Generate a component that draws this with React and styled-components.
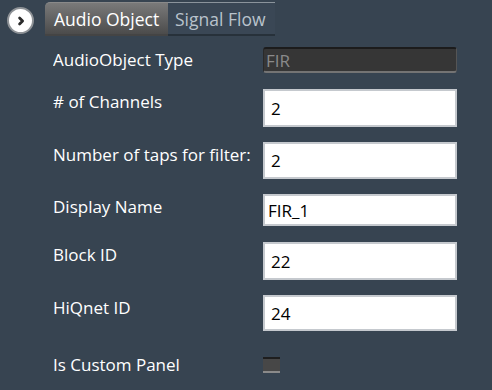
import React from 'react';
import styled, { createGlobalStyle } from 'styled-components';

const GlobalStyle = createGlobalStyle`
  html, body {
    margin: 0;
    padding: 0;
    background: #374451;
  }
  body {
    font-family: "Open Sans", "Noto Sans", sans-serif;
  }
`;

const Page = styled.div`
  width: 492px;
  height: 390px;
  background: #374451;
  overflow: hidden;
`;

const Header = styled.div`
  display: flex;
  align-items: flex-start;
  padding: 2px 0 0 7px;
  height: 45px;
  box-sizing: border-box;
`;

const CircleButton = styled.button`
  width: 27px;
  height: 27px;
  margin-top: 5px;
  margin-right: 11px;
  border-radius: 50%;
  background: #fff;
  border: 2px solid #8e9296;
  box-sizing: border-box;
  padding: 0;
  display: flex;
  align-items: center;
  justify-content: center;
`;

const TabStrip = styled.div`
  display: flex;
  height: 34px;
`;

const Tab = styled.div`
  display: flex;
  align-items: center;
  box-sizing: border-box;
  height: 34px;
  font-size: 17.5px;
  padding: 0 0 0 ${(p) => (p.$active ? 9 : 7)}px;
  width: ${(p) => p.$width}px;
  white-space: nowrap;
  overflow: hidden;
  color: ${(p) => (p.$active ? '#ffffff' : '#b9c3cc')};
  background: ${(p) =>
    p.$active ? 'linear-gradient(#7a7a7a, #4b4b4b)' : '#3a4755'};
  border-top: 1px solid ${(p) => (p.$active ? '#8a8a8a' : '#8b949c')};
  border-bottom: 2px solid ${(p) => (p.$active ? '#444' : '#27313a')};
  border-radius: ${(p) => (p.$active ? '5px 0 0 0' : '0')};
`;

const Form = styled.div`
  display: flex;
  flex-direction: column;
  padding-left: 53px;
  padding-top: 2px;
`;

const Row = styled.div`
  display: grid;
  grid-template-columns: 210px 194px;
  align-items: ${(p) => (p.$center ? 'center' : 'start')};
  margin-bottom: ${(p) => p.$gap}px;
`;

const Label = styled.div`
  color: #ffffff;
  font-size: 17px;
  line-height: 26px;
  white-space: nowrap;
  overflow: hidden;
  padding-right: 14px;
`;

const TextBox = styled.div`
  box-sizing: border-box;
  height: ${(p) => p.$h}px;
  background: #fff;
  border: 2px solid #c5c9ce;
  color: #000;
  font-size: 17px;
  display: flex;
  align-items: center;
  padding-left: ${(p) => p.$pad}px;
`;

const ReadOnlyBox = styled.div`
  box-sizing: border-box;
  height: 26px;
  background: #363636;
  border-top: 2px solid #1c1c1c;
  border-bottom: 2px solid #747474;
  border-left: 1px solid #2a2a2a;
  border-right: 1px solid #555;
  border-radius: 3px;
  color: #8a8a8a;
  font-size: 17px;
  display: flex;
  align-items: center;
  padding-left: 2px;
`;

const CheckBox = styled.div`
  box-sizing: border-box;
  width: 17px;
  height: 16px;
  background: #474747;
  border-top: 2px solid #1e1e1e;
  border-bottom: 2px solid #8a8a8a;
`;

const fields = [
  { label: '# of Channels', value: '2', h: 38, gap: 15, pad: 6 },
  { label: 'Number of taps for filter:', value: '2', h: 37, gap: 15, pad: 6 },
  { label: 'Display Name', value: 'FIR_1', h: 32, gap: 16, pad: 3 },
  { label: 'Block ID', value: '22', h: 38, gap: 15, pad: 6 },
  { label: 'HiQnet ID', value: '24', h: 36, gap: 21, pad: 6 },
];

const App = () => {
  return (
    <Page>
      <GlobalStyle />
      <Header>
        <CircleButton aria-label="Expand">
          <svg width="12" height="12" viewBox="0 0 12 12">
            <path d="M4.6 3 L7.6 6 L4.6 9" fill="none" stroke="#2b2b2b" strokeWidth="2.8" strokeLinecap="round" strokeLinejoin="round" />
          </svg>
        </CircleButton>
        <TabStrip>
          <Tab $active $width={123}>Audio Object</Tab>
          <Tab $width={107}>Signal Flow</Tab>
        </TabStrip>
      </Header>
      <Form>
        <Row $gap={16}>
          <Label>AudioObject Type</Label>
          <ReadOnlyBox>FIR</ReadOnlyBox>
        </Row>
        {fields.map((f) => (
          <Row key={f.label} $gap={f.gap}>
            <Label>{f.label}</Label>
            <TextBox $h={f.h} $pad={f.pad}>{f.value}</TextBox>
          </Row>
        ))}
        <Row $center>
          <Label>Is Custom Panel</Label>
          <CheckBox />
        </Row>
      </Form>
    </Page>
  );
};

export default App;
